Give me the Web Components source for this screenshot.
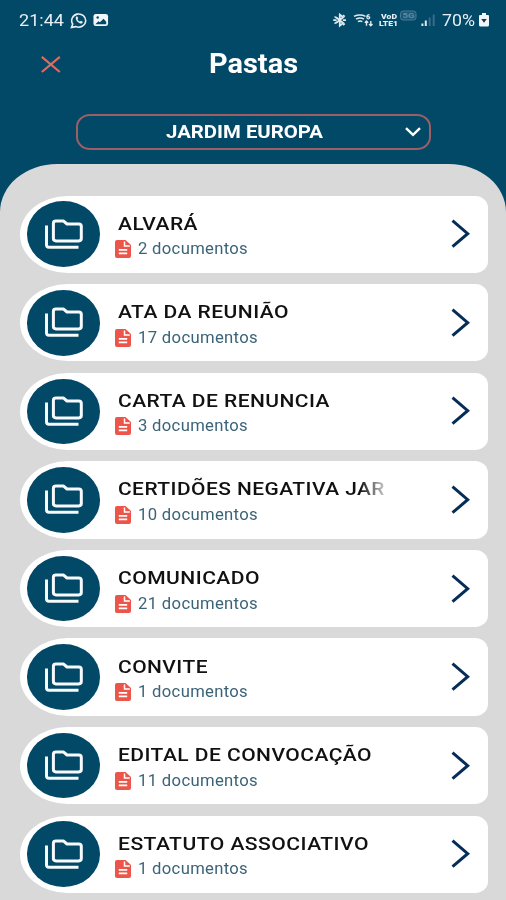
<!DOCTYPE html>
<html lang="pt-BR">
<head>
<meta charset="utf-8">
<title>Pastas</title>
<style>
html,body{margin:0;height:100%;overflow:hidden;background:#024867}
body{font-family:Roboto,"Liberation Sans",sans-serif}
</style>
</head>
<body>
<folders-app></folders-app>
<script>
const define=(name,html,init)=>customElements.define(name,class extends HTMLElement{
  connectedCallback(){
    if(this.shadowRoot)return;
    const t=document.createElement('template');
    t.innerHTML=html;
    this.attachShadow({mode:'open'}).append(t.content.cloneNode(true));
    if(init)init.call(this,this.shadowRoot);
  }
});

/* Text stretched horizontally to the width given in its attribute. */
define('wide-text',`<style>:host{display:block;white-space:nowrap;overflow:visible}
span{display:inline-block;transform-origin:0 50%}</style><span><slot></slot></span>`,function(root){
  const w=+this.getAttribute('width'),s=root.querySelector('span');
  this.style.width=w+'px';
  s.style.transform=`scaleX(${w/s.getBoundingClientRect().width})`;
});

define('status-bar',`<style>
:host{display:flex;height:40px;box-sizing:border-box;padding:0 17px 0 19px;align-items:center;justify-content:space-between;color:#e6eff3;font-size:17px;line-height:20px}
div{display:flex;align-items:center}svg{display:block;flex:none}
.volte{display:grid;width:20px;margin-left:-63px;margin-right:43px;font-size:7px;line-height:7px;font-weight:900;padding-top:1px}
</style>
<div><wide-text width="45">21:44</wide-text>
<svg style="margin-left:6px" width="18" height="17" viewBox="0 0 18 17" fill="none" stroke="#e6eff3"><path d="M1.5 15.4 2.7 12A7 6.6 0 1 1 5.8 14.6Z" stroke-width="1.6"/><path d="M6 4.8C4.8 7.5 8.2 12 11.9 11.6L13 10 11 8.8 9.8 9.6Q8.2 8.9 7.5 7.3L8.2 6.2 7.2 4.3Z" fill="#e6eff3" stroke="none"/></svg>
<svg style="margin-left:5px" width="16" height="14" viewBox="0 0 17 14"><rect x=".5" y=".5" width="15.5" height="13" rx="2.5" fill="#f1f6f8"/><circle cx="5" cy="4.3" r="1.3" fill="#024867"/><path d="M2.5 11.5 5.8 8.3 7.4 9.4 11.2 5.8 14 8.8V11.5Z" fill="#024867"/></svg></div>
<div>
<svg width="110" height="22" viewBox="0 0 110 22" fill="none" stroke="#dfeaf0">
<path d="M4 8.2 11.2 14 7.8 16.6V5.6L11.2 8.2 4 14M1.2 11.1H4.6M10.8 11.1H14" stroke-width="1.8"/><path d="M2.5 7.6 4.6 9M2.5 14.6 4.6 13.2M11 6.1 12.8 7.6M11 16.1 12.8 14.6" stroke-width="1.5"/>
<path d="M22 7.4Q28 4.6 33.5 7.4M24 10.2Q28 7.8 32 10.2M26 12.7Q28 11.2 30.3 12.7" stroke-width="1.5"/><path d="M37.5 5.6Q34.8 5.6 34.8 8Q34.8 9.8 36.3 9.8Q37.8 9.8 37.8 8.6Q37.8 7.5 35.1 7.7" stroke-width="1.2"/><path d="M34.5 16.8V12M32.8 13.7 34.5 12 36.2 13.7M38.8 12V16.8M37.1 15.1 38.8 16.8 40.5 15.1" stroke-width="1.4"/>
<rect x="68.5" y="2" width="15.5" height="9" rx="2.5" fill="#1c5979" stroke="#477b94"/><text x="70.5" y="9.3" font-family="Roboto" font-size="8" font-weight="700" fill="#5c8ba1" stroke="none" textLength="12" lengthAdjust="spacingAndGlyphs">5G</text>
<path d="M90.4 17V14.5M93.8 17V11.5" stroke-width="2"/><path d="M97.7 17V8.5M101.7 17V5.5" stroke="#386d88" stroke-width="2"/></svg>
<div class="volte"><wide-text width="16" style="margin-left:2px">VoD</wide-text><wide-text width="19">LTE1</wide-text></div>
<wide-text width="33">70%</wide-text>
<svg style="margin-left:4px" width="10" height="14" viewBox="0 0 10 14"><path d="M3 0H7V2H9Q10 2 10 3V12Q10 13.5 8.5 13.5H1.5Q0 13.5 0 12V3Q0 2 1 2H3Z" fill="#f1f6f8"/><path d="M2.3 6H7.7L5 9.8Z" fill="#173642"/></svg>
</div>`);

define('page-header',`<style>
:host{display:grid;grid-template-columns:80px 1fr 80px;height:48px;align-items:center;color:#fff;font-size:27px;font-weight:700;line-height:32px}
svg{margin-left:41px;display:block}wide-text{justify-self:center}
</style><svg width="20" height="18" viewBox="0 0 20 18"><path d="M.8 1.8 18.8 17M18.8 1.8 .8 17" stroke="#df6a60" stroke-width="2.2"/></svg><wide-text width="89"><slot></slot></wide-text>`);

define('site-select',`<style>
:host{display:grid;grid-template-columns:1fr auto 1fr;align-items:center;box-sizing:border-box;width:355px;height:36px;margin:26px 0 0 76px;border:2px solid #9c5f65;border-radius:14px/13px;color:#fff;font-size:18px;font-weight:700;line-height:20px}
wide-text{grid-column:2;position:relative;left:-9.5px;top:-.5px}svg{justify-self:end;margin-right:8px}
</style><wide-text width="157"><slot></slot></wide-text><svg width="16" height="10" viewBox="0 0 16 10"><path d="M1 1.2 8 7.8 15 1.2" fill="none" stroke="#fff" stroke-width="2.5"/></svg>`);

define('folder-icon',`<style>
:host{display:grid;place-items:center;width:73px;height:65.5px;border-radius:50%;background:#024867;flex:none}
svg{display:block;margin-bottom:1px}
</style><svg width="38" height="30" viewBox="0 0 38 30" fill="none" stroke="#f7fafc" stroke-width="3" stroke-linejoin="round"><path d="M1.5 6.4V26Q1.5 28.2 4 28.2H33.5"/><path d="M11 1.9H18.3L22 5H33.8Q36.3 5 36.3 7.3V19.6Q36.3 21.9 33.8 21.9H11Q8.4 21.9 8.4 19.6V4.2Q8.4 1.9 11 1.9Z"/></svg>`);

define('folder-card',`<style>
:host{display:flex;align-items:center;box-sizing:border-box;width:468px;height:77.2px;padding:0 18px 0 7px;background:#fff;border-radius:48px 13px 13px 48px/39px 12px 12px 39px}
.copy{width:267px;margin-left:18px;flex:none}
.title{overflow:hidden;font-size:18.3px;font-weight:500;line-height:24px;color:#111;padding-top:4.6px;letter-spacing:.4px}
.title.clip{-webkit-mask:linear-gradient(90deg,#000 242px,#0003 267px);mask:linear-gradient(90deg,#000 242px,#0003 267px)}
.meta{display:flex;align-items:center;height:24px;margin:1.5px 0 0 -3px;color:#3b6378;font-size:15.7px;line-height:24px;letter-spacing:.3px}
.meta wide-text{margin-left:7px}
.arrow{margin-left:auto;flex:none}
</style><folder-icon></folder-icon><div class="copy"><div class="title"></div><div class="meta"><svg width="16" height="18" viewBox="0 0 16 18"><path d="M2 0H10.5L16 5V16Q16 18 14 18H2Q0 18 0 16V2Q0 0 2 0Z" fill="#ec5549"/><path d="M9.5 1.5V6H14.8" stroke="#fff" fill="none" stroke-width="1.5"/><path d="M3.8 9.8H12.2M3.8 13.4H12.2" stroke="#fff" stroke-width="1.8"/></svg></div></div><svg class="arrow" width="19" height="30" viewBox="0 0 19 30"><path d="M1.5 1.7 16.7 14.7 1.5 27.7" fill="none" stroke="#052d57" stroke-width="3"/></svg>`,function(root){
  const text=(value,width)=>{const e=document.createElement('wide-text');e.setAttribute('width',width);e.textContent=value;return e};
  const w=+this.getAttribute('title-width'),t=root.querySelector('.title');
  t.append(text(this.getAttribute('name'),w));
  t.classList.toggle('clip',w>=267);
  const n=this.getAttribute('count');
  root.querySelector('.meta').append(text(n+' documentos',n.length>1?120:110));
});

define('folder-sheet',`<style>
:host{display:flex;flex-direction:column;gap:11.4px;flex:1;margin-top:13.5px;padding:32.1px 18px 0 20px;background:#d9d9d9;border-radius:57px 57px 0 0/48px 48px 0 0}
</style><slot></slot>`);

define('folders-app',`<style>:host{display:flex;flex-direction:column;width:506px;height:900px;overflow:hidden;background:#024867}folder-card{flex:none}</style>
<status-bar></status-bar><page-header>Pastas</page-header><site-select>JARDIM EUROPA</site-select>
<folder-sheet>
<folder-card name="ALVARÁ" title-width="80" count="2"></folder-card>
<folder-card name="ATA DA REUNIÃO" title-width="171" count="17"></folder-card>
<folder-card name="CARTA DE RENUNCIA" title-width="212" count="3"></folder-card>
<folder-card name="CERTIDÕES NEGATIVA JAR" title-width="267" count="10"></folder-card>
<folder-card name="COMUNICADO" title-width="142" count="21"></folder-card>
<folder-card name="CONVITE" title-width="90" count="1"></folder-card>
<folder-card name="EDITAL DE CONVOCAÇÃO" title-width="254" count="11"></folder-card>
<folder-card name="ESTATUTO ASSOCIATIVO" title-width="251" count="1"></folder-card>
</folder-sheet>`);
</script>
</body>
</html>
